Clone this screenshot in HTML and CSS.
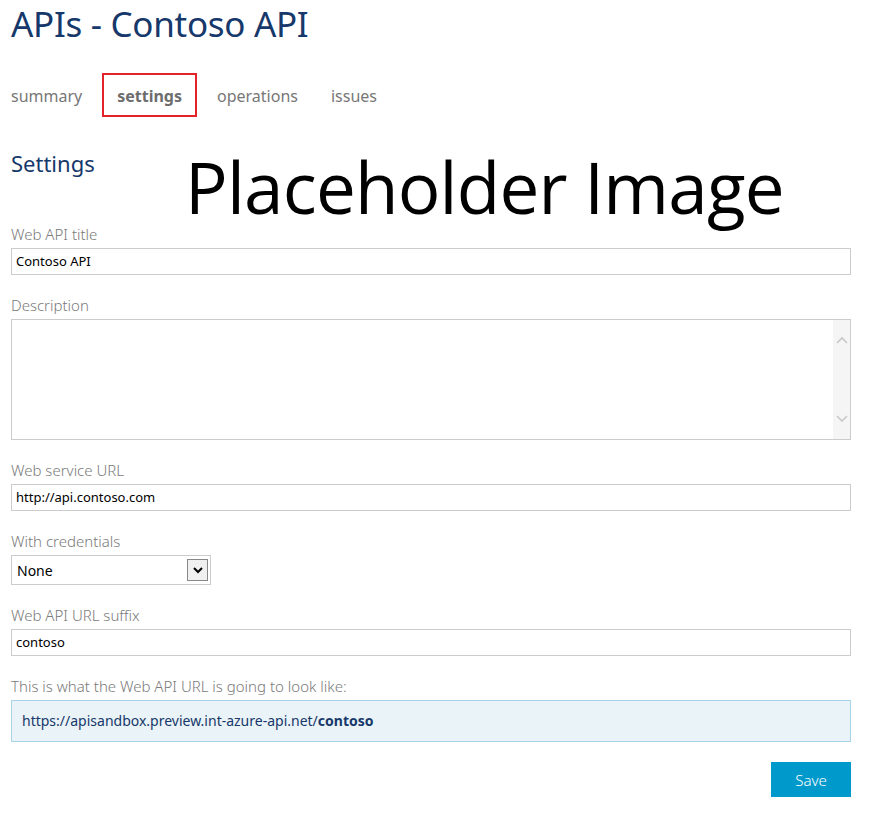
FILE: index.html
```html
<!DOCTYPE html>
<html>
<head>
<meta charset="utf-8">
<link rel="stylesheet" href="styles.css">
</head>
<body>
<div class="page">
  <h1 class="title">APIs - Contoso API</h1>
  <nav class="tabs">
    <span class="tab">summary</span>
    <span class="tab active">settings</span>
    <span class="tab">operations</span>
    <span class="tab last">issues</span>
  </nav>
  <section class="settings">
    <h2 class="heading">Settings</h2>
    <div class="placeholder">Placeholder Image</div>
    <div class="field first">
      <label class="label">Web API title</label>
      <div class="input">Contoso API</div>
    </div>
    <div class="field">
      <label class="label">Description</label>
      <div class="textarea">
        <div class="scroll">
          <svg width="12" height="8" viewBox="0 0 12 8"><path d="M1 7 L6 2 L11 7" fill="none" stroke="#c8c8c8" stroke-width="1.6"/></svg>
          <svg width="12" height="8" viewBox="0 0 12 8"><path d="M1 1 L6 6 L11 1" fill="none" stroke="#c8c8c8" stroke-width="1.6"/></svg>
        </div>
      </div>
    </div>
    <div class="field">
      <label class="label">Web service URL</label>
      <div class="input">http://api.contoso.com</div>
    </div>
    <div class="field">
      <label class="label">With credentials</label>
      <div class="select">
        <span>None</span>
        <span class="drop"><svg width="12" height="8" viewBox="0 0 12 8"><path d="M2 2 L6 6 L10 2" fill="none" stroke="#000" stroke-width="2"/></svg></span>
      </div>
    </div>
    <div class="field">
      <label class="label">Web API URL suffix</label>
      <div class="input">contoso</div>
    </div>
    <div class="field">
      <label class="label">This is what the Web API URL is going to look like:</label>
      <div class="preview">https://apisandbox.preview.int-azure-api.net/<b>contoso</b></div>
    </div>
    <div class="actions">
      <button class="save">Save</button>
    </div>
  </section>
</div>
</body>
</html>
```
FILE: styles.css
```css
html, body { margin: 0; padding: 0; background: #fff; }
body { font-family: "Noto Sans", "Open Sans", sans-serif; }
.page { width: 840px; padding: 0 0 0 11px; }
.title {
  margin: 0; padding-top: 0;
  font-size: 35px; font-weight: 400; color: #16386a;
  line-height: 48px; letter-spacing: -0.3px;
}
.tabs { display: flex; align-items: center; margin-top: 25px; height: 43px; }
.tab { font-size: 16px; color: #777; line-height: 37px; padding-top: 4px; }
.tab:first-child { margin-right: 20px; }
.tab.active { font-weight: 700; color: #6d6d6d; border: 2px solid #e3222a; padding: 3px 13px 0; margin-right: 20px; }
.tab.last { margin-left: 33px; }
.settings { position: relative; margin-top: 32px; }
.heading { margin: 0; font-size: 22px; font-weight: 400; color: #16386a; line-height: 30px; }
.placeholder {
  position: absolute; left: 174px; top: -1px;
  font-family: "Open Sans", sans-serif; font-size: 71px; color: #000;
  letter-spacing: -0.8px; line-height: 80px; white-space: nowrap;
}
.field { margin-top: 21px; }
.field.first { margin-top: 47px; }
.label { display: block; font-size: 15px; font-weight: 300; color: #7a7a7a; line-height: 19px; margin-bottom: 4px; }
.input {
  height: 25px; border: 1px solid #ccc; box-sizing: content-box;
  font-size: 13px; color: #000; line-height: 25px; padding-left: 4px;
}
.textarea { height: 119px; border: 1px solid #ccc; display: flex; justify-content: flex-end; }
.scroll {
  width: 17px; background: #f5f5f5; display: flex; flex-direction: column;
  justify-content: space-between; align-items: center; padding: 16px 0 16px;
}
.select {
  width: 193px; height: 28px; border: 1px solid #ccc; display: flex; align-items: center;
  justify-content: space-between; padding-left: 5px; box-sizing: content-box;
  font-size: 14px; color: #000;
}
.drop {
  width: 19px; height: 20px; border: 1px solid #888; background: #f0f0f0;
  display: flex; align-items: center; justify-content: center; margin-right: 2px;
}
.preview {
  height: 40px; background: #eaf3f7; border: 1px solid #a9d3e6; line-height: 40px;
  padding-left: 10px; font-size: 14px; color: #16386a;
}
.preview b { font-weight: 700; }
.actions { display: flex; justify-content: flex-end; margin-top: 20px; }
.save {
  width: 80px; height: 35px; background: #0099cc; color: #fff; border: 0;
  font-family: inherit; font-size: 15px; font-weight: 300; padding: 0;
}
```
